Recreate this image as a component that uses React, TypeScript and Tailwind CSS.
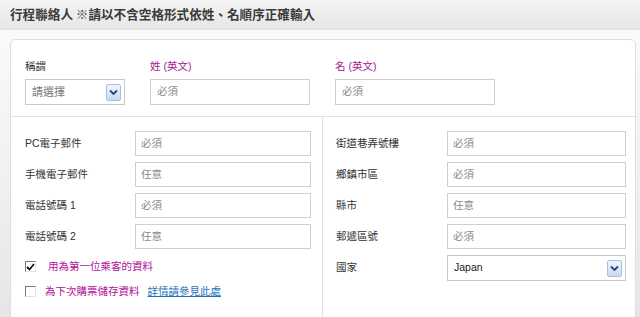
const FONT = "font-['Liberation_Sans','Noto_Sans_CJK_TC',sans-serif]"

function ArrowButton() {
  return (
    <span className="flex h-[17px] w-[15px] items-center justify-center rounded-[2px] border border-[#a9bfe2] bg-gradient-to-b from-[#f0f5fd] to-[#c9daf3]">
      <svg width="9" height="7" viewBox="0 0 9 7">
        <path d="M1 1.5 L4.5 5 L8 1.5" fill="none" stroke="#2b4573" strokeWidth="1.8" />
      </svg>
    </span>
  )
}

function Select({ value, dark }: { value: string; dark?: boolean }) {
  return (
    <div className="flex h-[26px] w-full items-center justify-between border border-[#c9c9c9] bg-white pl-[6px] pr-[3px]">
      <span className={dark ? 'text-[10.5px] text-[#222]' : 'text-[11px] text-[#777]'}>{value}</span>
      <ArrowButton />
    </div>
  )
}

function Input({ hint }: { hint: string }) {
  return (
    <div className="flex h-[25px] w-full items-center border border-[#cfcfcf] bg-white pl-[5px] text-[10.5px] text-[#8a8a8a]">
      {hint}
    </div>
  )
}

function Row({ label, hint, labelW }: { label: string; hint: string; labelW: string }) {
  return (
    <div className="flex h-[25px] items-center">
      <div className={`${labelW} shrink-0 text-[10.5px] text-[#333]`}>{label}</div>
      <div className="flex-1">
        <Input hint={hint} />
      </div>
    </div>
  )
}

function Checkbox({ checked }: { checked?: boolean }) {
  return (
    <span className="flex h-[11px] w-[11px] items-center justify-center border-t-[1.5px] border-l-[1.5px] border-r border-b border-t-[#7a7a7a] border-l-[#7a7a7a] border-r-[#e4e4e4] border-b-[#e4e4e4] bg-white">
      {checked && (
        <svg width="9" height="8" viewBox="0 0 9 8">
          <path d="M1 4 L3.5 6.5 L8 1" fill="none" stroke="#111" strokeWidth="1.8" />
        </svg>
      )}
    </span>
  )
}

export default function App() {
  const left = [
    ['PC電子郵件', '必須'],
    ['手機電子郵件', '任意'],
    ['電話號碼 1', '必須'],
    ['電話號碼 2', '任意'],
  ]
  const right = [
    ['街道巷弄號樓', '必須'],
    ['鄉鎮市區', '必須'],
    ['縣市', '任意'],
    ['郵遞區號', '必須'],
  ]

  return (
    <div className={`h-[317px] w-[640px] overflow-hidden bg-[#f8f8f8] ${FONT}`}>
      <div className="flex h-[30px] items-center border-b border-[#e2e2e2] bg-gradient-to-b from-[#f4f4f4] to-[#e6e6e6] pl-[10px]">
        <h1 className="font-['Noto_Sans_CJK_TC',sans-serif] text-[12.6px] font-bold text-[#3a3a3a]">
          行程聯絡人 ※請以不含空格形式依姓、名順序正確輸入
        </h1>
      </div>

      <div className="h-[287px] bg-gradient-to-b from-[#fafafa] via-[#f1f1f1] to-[#e6e6e6] pl-[10px] pr-[4px] pt-[9px]">
        <div className="h-[300px] rounded-[5px] border border-[#dedede] bg-white">
          <div className="flex h-[76px] pl-[14px] pt-[19px]">
            <div className="w-[100px]">
              <div className="h-[14px] text-[10.5px] leading-[14px] text-[#333]">稱謂</div>
              <div className="mt-[6px]">
                <Select value="請選擇" />
              </div>
            </div>
            <div className="ml-[25px] w-[160px]">
              <div className="h-[14px] text-[10.5px] leading-[14px] text-[#a3168c]">姓 (英文)</div>
              <div className="mt-[6px]">
                <div className="flex h-[26px] items-center border border-[#cfcfcf] bg-white pl-[6px] text-[10.5px] text-[#8a8a8a]">必須</div>
              </div>
            </div>
            <div className="ml-[25px] w-[160px]">
              <div className="h-[14px] text-[10.5px] leading-[14px] text-[#a3168c]">名 (英文)</div>
              <div className="mt-[6px]">
                <div className="flex h-[26px] items-center border border-[#cfcfcf] bg-white pl-[6px] text-[10.5px] text-[#8a8a8a]">必須</div>
              </div>
            </div>
          </div>

          <div className="flex h-[220px] border-t border-[#e2e2e2]">
            <div className="w-[312px] border-r border-[#e2e2e2] pl-[14px] pr-[11px] pt-[14px]">
              <div className="flex flex-col gap-[6px]">
                {left.map(([l, h]) => (
                  <Row key={l} label={l} hint={h} labelW="w-[110px]" />
                ))}
              </div>
              <div className="mt-[5px] flex h-[25px] items-center gap-[12px] text-[10.5px]">
                <Checkbox checked />
                <span className="text-[#b0129a]">用為第一位乘客的資料</span>
              </div>
              <div className="flex h-[25px] items-center text-[10.5px]">
                <Checkbox />
                <span className="ml-[9px] text-[#b0129a]">為下次購票儲存資料</span>
                <a className="ml-[8px] text-[#1f73b7] underline">詳情請參見此處</a>
              </div>
            </div>
            <div className="flex-1 pl-[13px] pr-[9px] pt-[14px]">
              <div className="flex flex-col gap-[6px]">
                {right.map(([l, h]) => (
                  <Row key={l} label={l} hint={h} labelW="w-[111px]" />
                ))}
                <div className="flex h-[26px] items-center">
                  <div className="w-[111px] shrink-0 text-[10.5px] text-[#333]">國家</div>
                  <div className="flex-1">
                    <Select value="Japan" dark />
                  </div>
                </div>
              </div>
            </div>
          </div>
        </div>
      </div>
    </div>
  )
}
